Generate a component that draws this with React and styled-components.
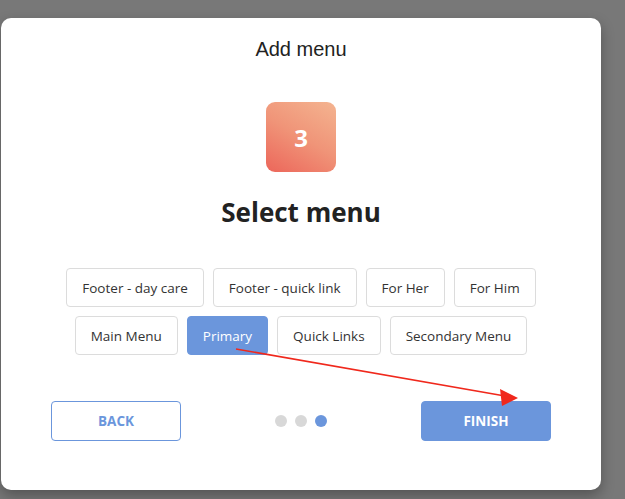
import React from "react";
import styled, { createGlobalStyle } from "styled-components";

const Global = createGlobalStyle`
  html, body { margin: 0; padding: 0; }
  body {
    background: #787878;
    width: 625px;
    height: 499px;
    overflow: hidden;
    font-family: "Open Sans", "Noto Sans", sans-serif;
  }
`;

const Page = styled.div`
  position: relative;
  width: 625px;
  height: 499px;
  padding: 18px 0 0 1px;
  box-sizing: border-box;
`;

const Modal = styled.div`
  width: 600px;
  height: 472px;
  background: #fff;
  border-radius: 10px;
  box-shadow: 0 6px 14px rgba(0, 0, 0, 0.3);
  display: flex;
  flex-direction: column;
  align-items: center;
  box-sizing: border-box;
  padding-top: 19px;
`;

const Title = styled.h2`
  margin: 0;
  font-family: "Liberation Sans", Arial, sans-serif;
  font-weight: 400;
  font-size: 20px;
  line-height: 24px;
  color: #222;
`;

const StepBadge = styled.div`
  margin-top: 41px;
  width: 70px;
  height: 70px;
  border-radius: 9px;
  background: linear-gradient(30deg, #ec665a 0%, #f09478 50%, #f4b490 100%);
  display: flex;
  align-items: center;
  justify-content: center;
  color: #fff;
  font-weight: 700;
  font-size: 24px;
`;

const Heading = styled.h1`
  margin: 23px 0 0;
  font-weight: 700;
  font-size: 26px;
  line-height: 34px;
  color: #222;
`;

const ChipGrid = styled.div`
  margin-top: 39px;
  display: flex;
  flex-direction: column;
  align-items: center;
  gap: 9px;
`;

const ChipRow = styled.div`
  display: flex;
  gap: 9px;
`;

const Chip = styled.button`
  height: 39px;
  padding: 0 15px;
  border-radius: 4px;
  border: 1px solid ${(p) => (p.$active ? "#6b96dc" : "#dcdcdc")};
  background: ${(p) => (p.$active ? "#6b96dc" : "#fff")};
  color: ${(p) => (p.$active ? "#fff" : "#333")};
  font-family: "Open Sans", "Noto Sans", sans-serif;
  font-size: 13.5px;
  cursor: pointer;
`;

const Footer = styled.div`
  margin-top: 46px;
  width: 500px;
  display: flex;
  align-items: center;
  justify-content: space-between;
`;

const NavButton = styled.button`
  width: 130px;
  height: 40px;
  border-radius: 4px;
  border: 1px solid #6b96dc;
  background: ${(p) => (p.$primary ? "#6b96dc" : "#fff")};
  color: ${(p) => (p.$primary ? "#fff" : "#6b96dc")};
  font-family: "Open Sans", "Noto Sans", sans-serif;
  font-weight: 700;
  font-size: 13.5px;
  cursor: pointer;
`;

const Dots = styled.div`
  display: flex;
  gap: 8px;
`;

const Dot = styled.span`
  width: 12px;
  height: 12px;
  border-radius: 50%;
  background: ${(p) => (p.$active ? "#6b96dc" : "#d8d8d8")};
`;

const Annotation = styled.svg`
  position: absolute;
  left: 0;
  top: 0;
  pointer-events: none;
`;

const row1 = ["Footer - day care", "Footer - quick link", "For Her", "For Him"];
const row2 = ["Main Menu", "Primary", "Quick Links", "Secondary Menu"];

export default function App() {
  return (
    <>
      <Global />
      <Page>
        <Modal>
          <Title>Add menu</Title>
          <StepBadge>3</StepBadge>
          <Heading>Select menu</Heading>
          <ChipGrid>
            <ChipRow>
              {row1.map((t) => (
                <Chip key={t}>{t}</Chip>
              ))}
            </ChipRow>
            <ChipRow>
              {row2.map((t) => (
                <Chip key={t} $active={t === "Primary"}>
                  {t}
                </Chip>
              ))}
            </ChipRow>
          </ChipGrid>
          <Footer>
            <NavButton>BACK</NavButton>
            <Dots>
              <Dot />
              <Dot />
              <Dot $active />
            </Dots>
            <NavButton $primary>FINISH</NavButton>
          </Footer>
        </Modal>
        <Annotation width="625" height="499" viewBox="0 0 625 499">
          <line x1="236" y1="349" x2="505" y2="396" stroke="#f0281c" strokeWidth="1.6" />
          <polygon points="518,398 500,389 502,406" fill="#f0281c" />
        </Annotation>
      </Page>
    </>
  );
}
